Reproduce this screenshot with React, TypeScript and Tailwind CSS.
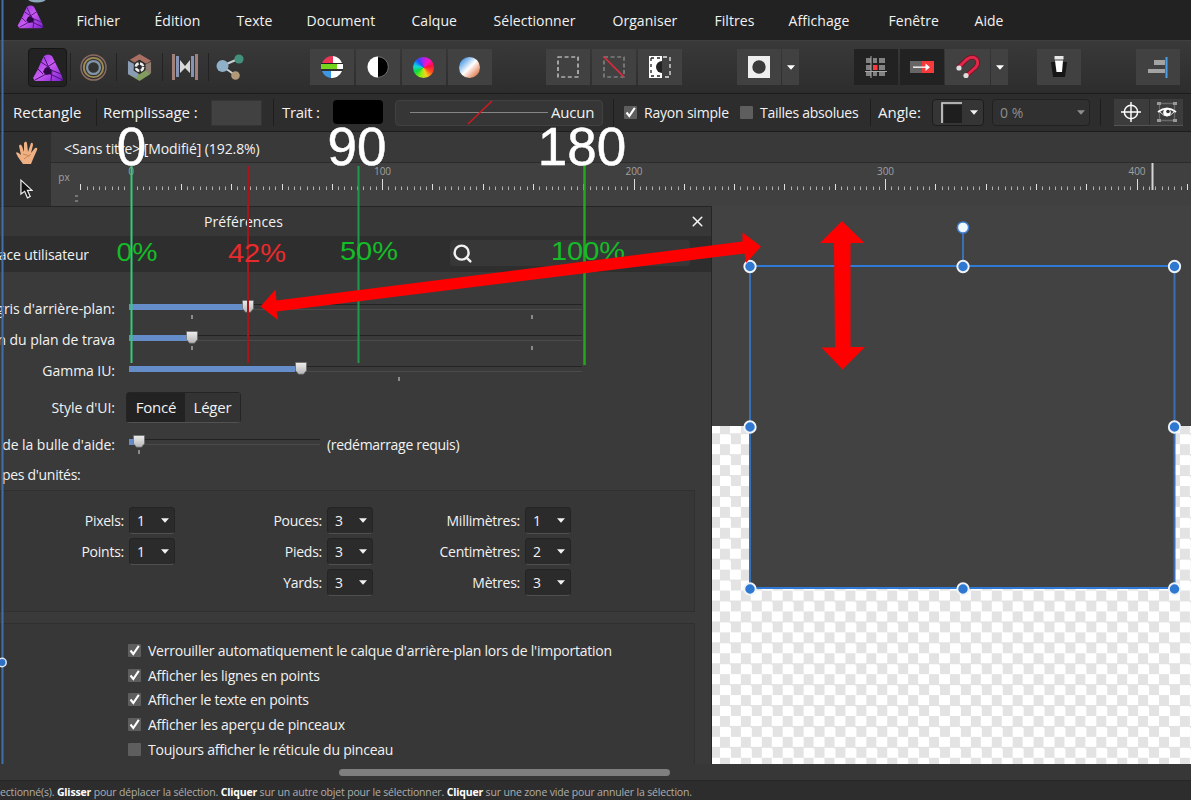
import React from "react";
import { Search, X } from "lucide-react";

const MENU: [string, string][] = [
  ["Fichier", "w-[78px]"],
  ["Édition", "w-[82px]"],
  ["Texte", "w-[70px]"],
  ["Document", "w-[105px]"],
  ["Calque", "w-[82px]"],
  ["Sélectionner", "w-[119px]"],
  ["Organiser", "w-[102px]"],
  ["Filtres", "w-[74px]"],
  ["Affichage", "w-[100px]"],
  ["Fenêtre", "w-[86px]"],
  ["Aide", "w-[60px]"],
];

function PhotoLogo({ className }: { className: string }) {
  return (
    <svg viewBox="0 0 30 28" className={className}>
      <defs>
        <linearGradient id="logo" x1="0" y1="0" x2="1" y2="1">
          <stop offset="0" stopColor="#8a2be0" />
          <stop offset="0.5" stopColor="#c95bf0" />
          <stop offset="1" stopColor="#7c1fd0" />
        </linearGradient>
      </defs>
      <path d="M11 2Q15-1 19 2L22 8L28 20L30 26L27 27H2L0 24L5 15L8 8Z" fill="url(#logo)" />
      <path d="M15 13L19 16L18 20L13 21L10 18L12 14Z" fill="#2c0a45" />
      <path d="M8 8L17 14M22 8L13 14M28 20L18 16M18 27L19 17M2 26L13 20M5 15L10 20M11 3L16 14M30 26L17 20" stroke="#4a1275" strokeWidth="1" />
    </svg>
  );
}

function Caret({ className = "" }: { className?: string }) {
  return (
    <svg viewBox="0 0 8 5" className={"h-[5px] w-[8px] shrink-0 " + className}>
      <path d="M0 0.3H8L4 4.7Z" fill="currentColor" />
    </svg>
  );
}

function Sep() {
  return <div className="h-[27px] w-px shrink-0 bg-[#1e1e1e]" />;
}

function Box({ on }: { on?: boolean }) {
  return (
    <svg viewBox="0 0 13 13" className="h-[13px] w-[13px] shrink-0">
      <rect width="13" height="13" rx="1" fill="#5e5e5e" />
      {on && <path d="M2.500 6.500L5.300 10L10.800 1.800" fill="none" stroke="#fff" strokeWidth="2.100" />}
    </svg>
  );
}

function ToolBtn({ children, w = "w-[44px]", dark }: { children: React.ReactNode; w?: string; dark?: boolean }) {
  return (
    <div className={"flex h-[36px] shrink-0 items-center justify-center text-white " + w + (dark ? " bg-[#222222]" : " bg-[#414141]")}>
      {children}
    </div>
  );
}

function Toolbar() {
  return (
    <div className="flex h-[53px] items-center border-t border-[#404040] bg-linear-to-b from-[#393939] to-[#2d2d2d] pl-[28px]">
      <div className="flex h-[39px] w-[39px] items-center justify-center rounded-sm border border-[#161616] bg-[#222]">
        <PhotoLogo className="mt-[2px] h-[28px] w-[30px]" />
      </div>
      <div className="ml-[3px] h-[28px] w-px bg-[#222]" />
      <div className="flex w-[45px] justify-center">
        <svg viewBox="0 0 28 28" className="h-[27px] w-[27px]" fill="none">
          <circle cx="14" cy="14" r="13" stroke="#8c6b63" strokeWidth="1.500" />
          <circle cx="14" cy="14" r="10" stroke="#9c8a55" strokeWidth="2" />
          <circle cx="14" cy="14" r="6.700" stroke="#8396a8" strokeWidth="2.400" />
        </svg>
      </div>
      <div className="h-[28px] w-px bg-[#222]" />
      <div className="flex w-[45px] justify-center">
        <svg viewBox="0 0 26 28" className="h-[27px] w-[25px]">
          <path d="M13 0L25 7L20 10L13 6L8 9L3 6Z" fill="#a86f62" />
          <path d="M25 8V20L20 23L19 11Z" fill="#8d7d72" />
          <path d="M24 21L13 28L3 22L12 19L19 16Z" fill="#829b5e" />
          <path d="M1 21V7L7 10V17L12 20L10 25Z" fill="#8b9db5" />
          <path d="M8 9L13 6L19 10V17L13 21L7 17Z" fill="#2a2a2a" />
          <circle cx="13" cy="13.500" r="3.800" fill="none" stroke="#eee" strokeWidth="2.600" strokeDasharray="4.500 1.500" />
        </svg>
      </div>
      <div className="h-[28px] w-px bg-[#222]" />
      <div className="flex w-[45px] justify-center">
        <svg viewBox="0 0 28 26" className="mr-[2px] h-[26px] w-[28px]">
          <path d="M1 0H4V26H1ZM24 0H27V26H24Z" fill="#a08079" />
          <path d="M5 2H8V23H5ZM20 2H23V23H20Z" fill="#8594b5" />
          <path d="M9 6L14 12L19 6V19L14 14L9 19Z" fill="#d8d8d8" />
        </svg>
      </div>
      <div className="h-[28px] w-px bg-[#222]" />
      <div className="flex w-[45px] justify-center">
        <svg viewBox="0 0 28 26" className="mr-[3px] h-[26px] w-[28px]">
          <path d="M6 12L22 5M6 12L19 21" stroke="#c9cfd3" strokeWidth="2" />
          <circle cx="6.500" cy="12" r="6" fill="#8fb0c8" />
          <circle cx="23" cy="5" r="4.600" fill="#43917c" />
          <circle cx="19.500" cy="21.500" r="4.300" fill="#b29a78" />
        </svg>
      </div>
      <div className="ml-[56px] flex gap-[2px]">
        <ToolBtn>
          <svg viewBox="0 0 22 22" className="h-[22px] w-[22px]">
            <path d="M1 7A11 11 0 0 1 12 0V7Z" fill="#ec3657" />
            <path d="M12 0A11 11 0 0 1 21 7H12Z" fill="#fff" />
            <path d="M0 8H16V13H0Z" fill="#74d51c" />
            <path d="M16 8H22V13H16Z" fill="#fff" />
            <path d="M1 15H10V22A11 11 0 0 1 1 15Z" fill="#3c97e4" />
            <path d="M10 15H21A11 11 0 0 1 10 22Z" fill="#fff" />
            <path d="M0 7.500H22M0 14H22" stroke="#222" />
          </svg>
        </ToolBtn>
        <ToolBtn>
          <svg viewBox="0 0 22 22" className="h-[22px] w-[22px]">
            <circle cx="11" cy="11" r="10.300" fill="#000" stroke="#888" strokeWidth="0.700" />
            <path d="M11 0.500A10.500 10.500 0 0 0 11 21.500Z" fill="#fff" />
          </svg>
        </ToolBtn>
        <ToolBtn>
          <div className="mr-[2px] h-[21px] w-[21px] rounded-full bg-[conic-gradient(from_0deg,#b020f0,#ff10c0,#ff1040,#ff5020,#f8d020,#90f010,#10d840,#10d8e0,#2050ff,#b020f0)]" />
        </ToolBtn>
        <ToolBtn>
          <div className="mr-[2px] h-[21px] w-[21px] rounded-full bg-linear-135 from-[#2f8fdc] from-10% via-white via-50% to-[#d5703c] to-90%" />
        </ToolBtn>
      </div>
      <div className="ml-[54px] flex gap-[2px]">
        <ToolBtn>
          <svg viewBox="0 0 22 22" className="h-[22px] w-[22px]" fill="none">
            <rect x="1" y="1" width="20" height="20" stroke="#e6e6e6" strokeWidth="1.200" strokeDasharray="4 2.600" />
          </svg>
        </ToolBtn>
        <ToolBtn>
          <svg viewBox="0 0 22 22" className="h-[22px] w-[22px]" fill="none">
            <rect x="1" y="1" width="20" height="20" stroke="#999" strokeWidth="1.200" strokeDasharray="4 2.600" />
            <path d="M1 1L21 21" stroke="#e8283c" strokeWidth="1.600" />
          </svg>
        </ToolBtn>
        <ToolBtn>
          <svg viewBox="0 0 22 22" className="h-[22px] w-[22px]" fill="none">
            <path d="M0 0H13V22H0Z" fill="#fff" />
            <path d="M13 5A6 6 0 0 0 13 17Z" fill="#222" />
            <path d="M2 2H12M2 20H12M2 2V20" stroke="#222" strokeWidth="1.300" strokeDasharray="3 3" />
            <path d="M14 1H21V21H14" stroke="#e6e6e6" strokeWidth="1.300" strokeDasharray="4 3" />
          </svg>
        </ToolBtn>
      </div>
      <div className="ml-[55px] flex gap-px">
        <ToolBtn>
          <svg viewBox="0 0 22 22" className="h-[22px] w-[22px]">
            <rect width="22" height="22" fill="#eee" />
            <circle cx="11" cy="11" r="6.700" fill="#3a3a3a" />
          </svg>
        </ToolBtn>
        <ToolBtn w="w-[17px]"><Caret /></ToolBtn>
      </div>
      <div className="ml-[55px] flex gap-[2px]">
        <ToolBtn dark>
          <svg viewBox="0 0 22 22" className="h-[22px] w-[22px]">
            <path d="M1 2H6V7H1ZM8 2H12V7H8ZM14 2H20V7H14ZM1 9H6V14H1ZM14 9H20V14H14ZM1 16H6V20H1ZM8 16H12V20H8ZM14 16H20V20H14Z" fill="#828282" />
            <path d="M8 9H12.500V14H8Z" fill="#ff3b3f" />
            <path d="M6 0V22M0 15.500H22" stroke="#a8a8a8" strokeWidth="1" />
          </svg>
        </ToolBtn>
        <ToolBtn dark>
          <svg viewBox="0 0 24 12" className="h-[12px] w-[24px]">
            <path d="M0 0H12V12H0Z" fill="#666" />
            <path d="M12 0H24V12H12Z" fill="#f63a3c" />
            <path d="M3 6.200H17" stroke="#eee" strokeWidth="1.500" />
            <path d="M15.500 2.500L20 6.200L15.500 10" fill="#fff" />
          </svg>
        </ToolBtn>
      </div>
      <div className="ml-px flex gap-px">
        <ToolBtn w="w-[45px]">
          <svg viewBox="0 0 24 24" className="h-[24px] w-[24px]" fill="none">
            <path d="M2 13L10 5Q16 0 20.500 4Q23 8 20 12L10.500 20.500" stroke="#7a0f28" strokeWidth="4.600" />
            <path d="M2 13L10 5Q16 0 20.500 4Q23 8 20 12L10.500 20.500" stroke="#e02848" strokeWidth="3" />
            <circle cx="3" cy="13" r="2.600" fill="#ddd" />
            <circle cx="10" cy="20.500" r="2.600" fill="#ddd" />
          </svg>
        </ToolBtn>
        <ToolBtn w="w-[17px]"><Caret /></ToolBtn>
      </div>
      <div className="ml-[29px]">
        <ToolBtn>
          <svg viewBox="0 0 16 22" className="h-[22px] w-[16px]">
            <path d="M0 6H16L14 21H2Z" fill="#161616" />
            <path d="M3.500 0H12.500V3.500H3.500Z" fill="#e8e8e8" />
            <path d="M4 4.500H12L11 16H5.500Z" fill="#fff" />
          </svg>
        </ToolBtn>
      </div>
      <div className="ml-[55px]">
        <ToolBtn>
          <svg viewBox="0 0 20 21" className="h-[21px] w-[20px]">
            <path d="M6 3H17V8H6ZM0 12H17V16H0Z" fill="#a3a3a3" />
            <path d="M18.500 0V21" stroke="#4a9fe8" strokeWidth="2" />
          </svg>
        </ToolBtn>
      </div>
    </div>
  );
}

function ContextBar() {
  return (
    <div className="flex h-[39px] items-center border-t border-b border-[#1c1c1c] bg-[#2d2d2d] pl-[13px] text-[15px] whitespace-nowrap">
      <div className="w-[83px] tracking-[0.05px]">Rectangle</div>
      <Sep />
      <div className="ml-[6px] w-[108px] tracking-[-0.05px]">Remplissage :</div>
      <div className="h-[26px] w-[51px] shrink-0 border border-[#353535] bg-[#414141]" />
      <div className="ml-[11px]"><Sep /></div>
      <div className="ml-[8px] w-[51px] tracking-[-0.3px]">Trait :</div>
      <div className="mb-[2px] h-[24px] w-[50px] shrink-0 rounded-sm bg-black" />
      <div className="ml-[12px] flex h-[26px] w-[208px] shrink-0 items-center rounded-sm border border-[#414141] bg-[#363636] pl-[14px]">
        <svg viewBox="0 0 138 24" className="h-[24px] w-[138px] shrink-0">
          <path d="M0 11.500H138" stroke="#858585" />
          <path d="M58 23L82 0" stroke="#d01a22" strokeWidth="1.500" />
        </svg>
        <span className="ml-[3px] tracking-[-0.2px]">Aucun</span>
      </div>
      <div className="ml-[10px]"><Sep /></div>
      <div className="ml-[10px] flex w-[116px] shrink-0 items-center gap-[7px] text-[14px] tracking-[-0.2px]"><Box on />Rayon simple</div>
      <div className="flex w-[130px] shrink-0 items-center gap-[7px] text-[14px] tracking-[-0.25px]"><Box />Tailles absolues</div>
      <Sep />
      <div className="ml-[7px] w-[54px] tracking-[0px]">Angle:</div>
      <div className="flex h-[27px] w-[52px] shrink-0 items-center justify-between rounded-sm border border-[#1c1c1c] bg-[#353535] pr-[5px] pl-[8px]">
        <svg viewBox="0 0 21 21" className="h-[21px] w-[21px]">
          <path d="M3 3H21V21H3Z" fill="#1e1e1e" />
          <path d="M1 21V1H21" fill="none" stroke="#d8d8d8" strokeWidth="1.600" />
        </svg>
        <Caret />
      </div>
      <div className="ml-[8px] flex h-[27px] w-[98px] shrink-0 items-center justify-between rounded-sm border border-[#212121] bg-[#303030] pr-[4px] pl-[7px] text-[14px] text-[#8d8d8d]">
        <span>0 %</span>
        <Caret />
      </div>
      <div className="ml-[10px]"><Sep /></div>
      <div className="ml-[13px] flex gap-px border-b border-[#555]">
        <div className="flex h-[26px] w-[35px] items-center justify-center bg-[#3c3c3c]">
          <svg viewBox="0 0 21 21" className="mr-[2px] h-[20px] w-[20px]" fill="none" stroke="#fff" strokeWidth="1.500">
            <circle cx="10.500" cy="10.500" r="7" />
            <path d="M10.500 0V21M0 10.500H21" />
          </svg>
        </div>
        <div className="flex h-[26px] w-[33px] items-center justify-center bg-[#3c3c3c]">
          <svg viewBox="0 0 22 22" className="h-[22px] w-[22px]" fill="none">
            <path d="M3.500 3V19M18.500 3V19M3 2.500H19M3 19.500H19" stroke="#696969" strokeWidth="1.300" />
            <path d="M1 1H5V4H1ZM17 1H21V4H17ZM1 18H5V21H1ZM17 18H21V21H17Z" fill="#999" />
            <path d="M2 11Q11 4 20 11" stroke="#fff" strokeWidth="1.800" />
            <path d="M4 11Q11 19 18 11" stroke="#ddd" strokeWidth="1" />
            <circle cx="11" cy="11.500" r="3.800" fill="#fff" />
            <circle cx="12" cy="10.500" r="1.800" fill="#333" />
          </svg>
        </div>
      </div>
    </div>
  );
}

function Ruler() {
  const ticks = Array.from({ length: 178 }, (_, i) => ({ x: 29.3 + i * 6.2875, i }));
  return (
    <svg viewBox="0 0 1140 43" className="h-[43px] w-[1140px]">
      {ticks.map(({ x, i }) => {
        const major = i >= 8 && (i - 8) % 40 === 0;
        const mid = i % 8 === 0;
        return (
          <rect key={i} x={Math.round(x)} y={major ? 16 : mid ? 21 : 23.5} width="1" height={major ? 11 : mid ? 6 : 3.5} fill={mid ? "#dedede" : "#b0b0b0"} />
        );
      })}
      <g fill="#a0a0a0" fontSize="10" fontFamily="Open Sans, sans-serif" textAnchor="middle">
        <text x="13" y="18">px</text>
        <text x="80" y="12">0</text>
        <text x="331.500" y="12">100</text>
        <text x="583" y="12">200</text>
        <text x="834.500" y="12">300</text>
        <text x="1086" y="12">400</text>
      </g>
      <path d="M1101.500 0V27" stroke="#d5d5d5" strokeWidth="2" />
      <path d="M24 33H27M24 38H27" stroke="#aaa" />
    </svg>
  );
}

function Slider({ w, fill, at, marks, top }: { w: string; fill: string; at: string; marks: string[]; top: string }) {
  return (
    <div className={"relative h-[6px] border-t border-b border-t-[#232323] border-b-[#4b4b4b] " + w + " " + top}>
      <div className={"absolute -top-px left-0 h-[6px] bg-[#648dc9] " + fill} />
      <svg viewBox="0 0 12 13" className={"absolute -top-[5px] h-[13px] w-[12px] " + at}>
        <defs>
          <linearGradient id="thumb" x1="0" y1="0" x2="0" y2="1">
            <stop offset="0" stopColor="#eeeeee" />
            <stop offset="1" stopColor="#b4b4b4" />
          </linearGradient>
        </defs>
        <path d="M0.500 0.500H11.500V8.500L8.500 12.200H3.500L0.500 8.500Z" fill="url(#thumb)" stroke="#606060" strokeWidth="0.600" />
      </svg>
      {marks.map((m) => (
        <div key={m} className={"absolute top-[10px] h-[4px] w-[2px] bg-[#8a8a8a] " + m} />
      ))}
    </div>
  );
}

function Row({ label, h, track = "tracking-[-0.05px]", children }: { label: string; h: string; track?: string; children?: React.ReactNode }) {
  return (
    <div className={"flex items-center " + h}>
      <div className={"mr-px flex w-[115px] shrink-0 justify-end overflow-hidden whitespace-nowrap " + track}>{label}</div>
      {children}
    </div>
  );
}

function Unit({ label, value }: { label: string; value: number }) {
  return (
    <div className="flex h-[31px] items-center justify-end gap-[5px] tracking-[-0.25px]">
      {label}
      <div className="flex h-[27px] w-[46px] items-center justify-between rounded-sm border border-[#242424] border-b-[#505050] bg-[#2b2b2b] pr-[5px] pl-[7px] text-[14px]">
        {value}
        <Caret />
      </div>
    </div>
  );
}

function Check({ label, on }: { label: string; on?: boolean }) {
  return (
    <div className="flex h-[24.8px] items-center gap-[7px] tracking-[-0.23px] whitespace-nowrap">
      <Box on={on} />
      {label}
    </div>
  );
}

function Preferences() {
  return (
    <div className="flex w-[712px] shrink-0 flex-col overflow-hidden border-t border-r border-[#252525] bg-[#3a3a3a] text-[14px]">
      <div className="flex h-[29px] shrink-0 items-center bg-[#373737]">
        <div className="w-[690px] pl-[204px] tracking-[0.1px]">Préférences</div>
        <X className="-ml-[1px] h-[17px] w-[17px]" strokeWidth={2.2} />
      </div>
      <div className="flex h-[36px] shrink-0 items-center bg-[#2e2e2e]">
        <div className="flex w-[89px] justify-end overflow-hidden whitespace-nowrap tracking-[-0.1px]">ace utilisateur</div>
        <div className="mb-[2px] ml-[361px] flex h-[26px] w-[240px] items-center rounded-sm bg-[#373737] pl-[2px]">
          <Search className="h-[21px] w-[21px]" strokeWidth={2.8} />
        </div>
      </div>
      <div className="flex h-[218px] shrink-0 flex-col pt-[21px]">
        <Row label="gris d'arrière-plan:" h="h-[31px]">
          <Slider w="ml-[13px] w-[453px]" fill="w-[114px]" at="left-[113px]" marks={["left-[62px]", "left-[402px]"]} top="-mt-[4px]" />
        </Row>
        <Row label="n du plan de trava" h="h-[31px]">
          <Slider w="ml-[13px] w-[453px]" fill="w-[58px]" at="left-[57px]" marks={["left-[62px]", "left-[402px]"]} top="-mt-[4px]" />
        </Row>
        <Row label="Gamma IU:" h="h-[31px]">
          <Slider w="ml-[13px] w-[453px]" fill="w-[166px]" at="left-[166px]" marks={["left-[269px]"]} top="-mt-[4px]" />
        </Row>
        <Row label="Style d'UI:" h="h-[43px]">
          <div className="ml-[10px] flex h-[31px] w-[115px] rounded-sm border border-[#242424] border-b-[#525252] text-[15px] tracking-[-0.2px]">
            <div className="flex w-[58px] items-center justify-center bg-[#222]">Foncé</div>
            <div className="flex grow items-center justify-center bg-[#333]">Léger</div>
          </div>
        </Row>
        <Row label="de la bulle d'aide:" h="h-[30px]">
          <Slider w="ml-[13px] w-[191px]" fill="w-[8px]" at="left-[4px]" marks={["left-[9px]"]} top="-mt-[4px]" />
          <span className="ml-[7px] tracking-[-0.3px]">(redémarrage requis)</span>
        </Row>
        <div className="flex h-[31px] items-center pl-[2px] tracking-[-0.3px]">pes d'unités:</div>
      </div>
      <div className="flex h-[122px] w-[695px] shrink-0 border border-[#303030] bg-[#373737] pt-[14px]">
        <div className="w-[174px]">
          <Unit label="Pixels:" value={1} />
          <Unit label="Points:" value={1} />
        </div>
        <div className="w-[198px]">
          <Unit label="Pouces:" value={3} />
          <Unit label="Pieds:" value={3} />
          <Unit label="Yards:" value={3} />
        </div>
        <div className="w-[198px]">
          <Unit label="Millimètres:" value={1} />
          <Unit label="Centimètres:" value={2} />
          <Unit label="Mètres:" value={3} />
        </div>
      </div>
      <div className="mt-[11px] w-[695px] grow border border-b-0 border-[#303030] bg-[#373737] pt-[14px] pl-[127px]">
        <Check on label="Verrouiller automatiquement le calque d'arrière-plan lors de l'importation" />
        <Check on label="Afficher les lignes en points" />
        <Check on label="Afficher le texte en points" />
        <Check on label="Afficher les aperçu de pinceaux" />
        <Check label="Toujours afficher le réticule du pinceau" />
      </div>
    </div>
  );
}

const HANDLES = [[38, 60.5], [251, 60.5], [462.5, 60.5], [38, 221], [462.5, 221], [38, 383], [251, 383], [462.5, 383]];

function Canvas() {
  return (
    <div className="relative flex grow flex-col bg-[#424242]">
      <div className="h-[220px] shrink-0" />
      <div className="grow bg-[conic-gradient(#fff_25%,#e3e3e3_0_50%,#fff_0_75%,#e3e3e3_0)] bg-[length:20.92px_20.92px] bg-[position:8px_18.2px]" />
      <svg viewBox="0 0 479 558" className="absolute top-0 left-0 h-[558px] w-[479px]">
        <rect x="38" y="60" width="424.500" height="322" fill="#424242" />
        <path d="M38 60V382M462.500 60V382M251 22V60" stroke="#386fb5" strokeWidth="2" />
        <path d="M38 60H462.500M38 382H462.500" stroke="#2f7ad6" strokeWidth="2" />
        {HANDLES.map(([x, y]) => (
          <circle key={x + "-" + y} cx={x} cy={y} r="5.700" fill="#2f78d2" stroke="#f0f4f8" strokeWidth="1.900" />
        ))}
        <circle cx="251" cy="21.500" r="5.600" fill="#f0f8ff" stroke="#3f7fd0" strokeWidth="1.500" />
      </svg>
    </div>
  );
}

function Annotations() {
  return (
    <svg viewBox="0 0 1191 800" className="pointer-events-none absolute top-0 left-0 h-[800px] w-[1191px]">
      <path d="M2.500 0V764" stroke="#416fa9" strokeWidth="2" />
      <circle cx="2" cy="662.500" r="4.200" fill="#2f6fc4" stroke="#dbe7f5" strokeWidth="1.500" />
      <ellipse cx="37" cy="-1" rx="9" ry="3.500" fill="#8ca7b8" />
      <path d="M131.500 166V363" stroke="#35cb7a" strokeWidth="2" />
      <path d="M248 166V363" stroke="#a81518" strokeWidth="2" />
      <path d="M358.500 166V363" stroke="#209a48" strokeWidth="2" />
      <path d="M584.500 165V365" stroke="#24a81b" strokeWidth="2.500" />
      <g fontFamily="Liberation Sans, Arial, sans-serif" textAnchor="middle">
        <g fontSize="53" fill="#fff" stroke="#fff" strokeWidth="0.500">
          <text x="131.500" y="165">0</text>
          <text x="357" y="165">90</text>
          <text x="582" y="165">180</text>
        </g>
        <g fontSize="25" fill="#14bc28">
          <text x="137" y="261" textLength="41" lengthAdjust="spacingAndGlyphs">0%</text>
          <text x="369" y="260" textLength="58" lengthAdjust="spacingAndGlyphs">50%</text>
          <text x="588" y="259.500" textLength="74" lengthAdjust="spacingAndGlyphs">100%</text>
          <text x="257" y="262" textLength="58" lengthAdjust="spacingAndGlyphs" fill="#e92a2d">42%</text>
        </g>
      </g>
      <path d="M260.500 306.500L275.500 289.500L276.500 300.500L742.500 241.500L742.500 232.500L761 246.500L746 263L744.500 253.500L276.500 311.500L278 320Z" fill="#f00" />
      <path d="M842 221L864.500 243H850.500V347H865L842.500 369.500L821.500 347.500H835L834 243H820Z" fill="#f00" />
    </svg>
  );
}

export default function App() {
  return (
    <div className="relative flex h-[800px] w-[1191px] flex-col overflow-hidden bg-[#2d2d2d] font-['Open_Sans','Noto_Sans',sans-serif] text-[#f2f2f2]">
      <div className="flex h-[40px] shrink-0 items-center bg-[#222222] text-[14px] tracking-[0.05px] whitespace-nowrap">
        <div className="w-[76.5px] pl-[17px]">
          <PhotoLogo className="-mt-[6px] h-[24px] w-[27px]" />
        </div>
        {MENU.map(([label, w]) => (
          <div key={label} className={"shrink-0 " + w}>{label}</div>
        ))}
      </div>
      <Toolbar />
      <ContextBar />
      <div className="flex h-[74px] shrink-0">
        <div className="flex w-[51px] flex-col items-center bg-[#2f2f2f] pt-[9px] pl-[2px]">
          <svg viewBox="0 0 22 24" className="h-[24px] w-[22px]">
            <path d="M7 23L2 16L0 12Q1 10 5 14L3 5Q4 2 6 5L8 11L8 2Q10-1 11 2L12 11L15 2Q17 1 17 4L15 12L19 7Q22 6 21 9L17 18L15 23Z" fill="#efb184" />
            <path d="M7 13L14 15M8 18L15 13" stroke="#c98758" />
          </svg>
          <svg viewBox="0 0 14 21" className="mt-[14px] h-[20px] w-[13px]">
            <path d="M1 1V16L5 13L8 20L11 18.500L8 12H13Z" fill="#111" stroke="#eee" strokeWidth="1.300" />
          </svg>
        </div>
        <div className="flex grow flex-col">
          <div className="flex h-[31px] items-center border-b border-[#2b2b2b] bg-[#393939] pt-[2px] pl-[13px] text-[14px] tracking-[-0.1px]">
            &lt;Sans titre&gt; [Modifié] (192.8%)
          </div>
          <div className="h-[43px] bg-[#404040]"><Ruler /></div>
        </div>
      </div>
      <div className="flex h-[558px] shrink-0">
        <Preferences />
        <Canvas />
      </div>
      <div className="flex h-[16px] shrink-0 items-center bg-[#373737] pl-[339px]">
        <div className="h-[7px] w-[331px] rounded-full bg-[#7f7f7f]" />
      </div>
      <div className="flex h-[20px] shrink-0 items-center border-t border-[#262626] bg-[#2d2d2d] pt-[5px] text-[10.5px] tracking-[-0.17px] whitespace-pre text-[#adadad]">
        ectionné(s). <b className="text-white">Glisser</b> pour déplacer la sélection. <b className="text-white">Cliquer</b> sur un autre objet pour le sélectionner. <b className="text-white">Cliquer</b> sur une zone vide pour annuler la sélection.
      </div>
      <Annotations />
    </div>
  );
}
